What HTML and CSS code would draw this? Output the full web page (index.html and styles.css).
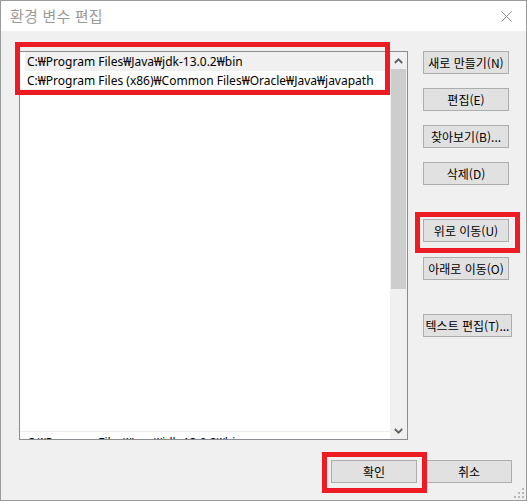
FILE: index.html
```html
<!DOCTYPE html>
<html lang="ko">
<head>
<meta charset="utf-8">
<title>환경 변수 편집</title>
<link rel="stylesheet" href="styles.css">
</head>
<body>
<div class="stage">
  <div class="window">
    <div class="titlebar">
      <span class="title">환경 변수 편집</span>
      <svg class="close" width="11" height="11" viewBox="0 0 11 11"><path d="M0.5 0.5 L10.5 10.5 M10.5 0.5 L0.5 10.5" stroke="#8a8a8a" stroke-width="1" fill="none"/></svg>
    </div>
    <div class="content">
      <div class="main">
        <div class="listbox">
          <div class="items">
            <div class="row selected">C:₩Program Files₩Java₩jdk-13.0.2₩bin</div>
            <div class="row lined">C:₩Program Files (x86)₩Common Files₩Oracle₩Java₩javapath</div>
            <div class="row clipped"><span>C:₩Program Files₩Java₩jdk-13.0.2₩bin</span></div>
          </div>
          <div class="scrollbar">
            <div class="arrow"><svg width="9" height="6" viewBox="0 0 9 6"><path d="M0.8 5 L4.5 1.3 L8.2 5" stroke="#606060" stroke-width="1.8" fill="none"/></svg></div>
            <div class="track"><div class="thumb"></div></div>
            <div class="arrow"><svg width="9" height="6" viewBox="0 0 9 6"><path d="M0.8 1 L4.5 4.7 L8.2 1" stroke="#606060" stroke-width="1.8" fill="none"/></svg></div>
          </div>
        </div>
        <div class="side">
          <button class="btn">새로 만들기(N)</button>
          <button class="btn">편집(E)</button>
          <button class="btn">찾아보기(B)...</button>
          <button class="btn">삭제(D)</button>
          <button class="btn gap-lg">위로 이동(U)</button>
          <button class="btn gap-sm">아래로 이동(O)</button>
          <button class="btn gap-lg wide">텍스트 편집(T)...</button>
        </div>
      </div>
      <div class="footer">
        <button class="btn">확인</button>
        <button class="btn">취소</button>
      </div>
    </div>
    <svg class="grip" width="10" height="10" viewBox="0 0 10 10">
      <rect x="8" y="0" width="2" height="2" fill="#b8b8b8"/>
      <rect x="4" y="4" width="2" height="2" fill="#b8b8b8"/>
      <rect x="8" y="4" width="2" height="2" fill="#b8b8b8"/>
      <rect x="0" y="8" width="2" height="2" fill="#b8b8b8"/>
      <rect x="4" y="8" width="2" height="2" fill="#b8b8b8"/>
      <rect x="8" y="8" width="2" height="2" fill="#b8b8b8"/>
    </svg>
  </div>
  <div class="mark mark-list"></div>
  <div class="mark mark-up"></div>
  <div class="mark mark-ok"></div>
</div>
</body>
</html>
```

FILE: styles.css
```css
* { box-sizing: border-box; }
html, body { margin: 0; padding: 0; }
body { background: #f0f0f0; }

.stage {
  position: relative;
  width: 527px;
  height: 501px;
}

.window {
  position: relative;
  width: 527px;
  height: 501px;
  border: 1px solid #9a9a9a;
  background: #f0f0f0;
  display: flex;
  flex-direction: column;
  font-family: "Noto Sans", "Noto Sans CJK KR", sans-serif;
  font-size: 12px;
  color: #000;
}

.titlebar {
  height: 30px;
  background: #fff;
  display: flex;
  align-items: center;
  justify-content: space-between;
  padding: 0 14px 0 9px;
  flex: none;
}

.title {
  font-family: "Noto Sans CJK KR", sans-serif;
  font-size: 15px;
  color: #9a9a9a;
  line-height: 20px;
  letter-spacing: 0.2px;
}

.close { display: block; }

.content {
  flex: 1;
  display: flex;
  flex-direction: column;
  padding: 20px 14px 0 18px;
}

.main {
  display: flex;
  align-items: flex-start;
  gap: 15px;
}

.listbox {
  width: 392px;
  height: 389px;
  border: 1px solid #8a8c92;
  background: #fff;
  display: flex;
}

.items {
  flex: 1;
  display: flex;
  flex-direction: column;
  overflow: hidden;
}

.row {
  height: 19px;
  line-height: 19px;
  padding-left: 7px;
  white-space: nowrap;
  font-family: "Noto Sans", "Noto Sans CJK KR", sans-serif;
  font-size: 12px;
}

.row.selected {
  background: #f0f0f0;
  margin-left: 5px;
  padding-left: 2px;
}

.row.lined {
  border-bottom: 1px solid #ececec;
}

.row.clipped {
  margin-top: auto;
  height: 8px;
  border-top: 1px solid #ececec;
  overflow: hidden;
  line-height: 21px;
}

.scrollbar {
  width: 17px;
  background: #f0f0f0;
  display: flex;
  flex-direction: column;
}

.arrow {
  height: 17px;
  display: flex;
  align-items: center;
  justify-content: center;
  flex: none;
}

.track {
  flex: 1;
  padding: 0 1px;
}

.thumb {
  height: 220px;
  background: #cdcdcd;
}

.side {
  display: flex;
  flex-direction: column;
  gap: 14px;
}

.btn {
  width: 86px;
  height: 23px;
  padding: 0;
  border: 1px solid #adadad;
  background: #e1e1e1;
  font-family: "Noto Sans CJK KR", sans-serif;
  font-size: 12px;
  line-height: 16px;
  color: #000;
  white-space: nowrap;
  display: flex;
  align-items: center;
  justify-content: center;
}

.btn.gap-lg { margin-top: 20px; }
.btn.gap-sm { margin-top: 1px; }
.btn.wide { width: 89px; }

.footer {
  display: flex;
  justify-content: flex-end;
  gap: 9px;
  margin-top: 20px;
}

.grip {
  position: absolute;
  right: 2px;
  bottom: 2px;
}

.mark {
  position: absolute;
  border: 5px solid #ed1c24;
}

.mark-list { left: 15px; top: 42px; width: 375px; height: 53px; }
.mark-up { left: 415px; top: 212px; width: 105px; height: 41px; }
.mark-ok { left: 322px; top: 452px; width: 105px; height: 41px; }
```
